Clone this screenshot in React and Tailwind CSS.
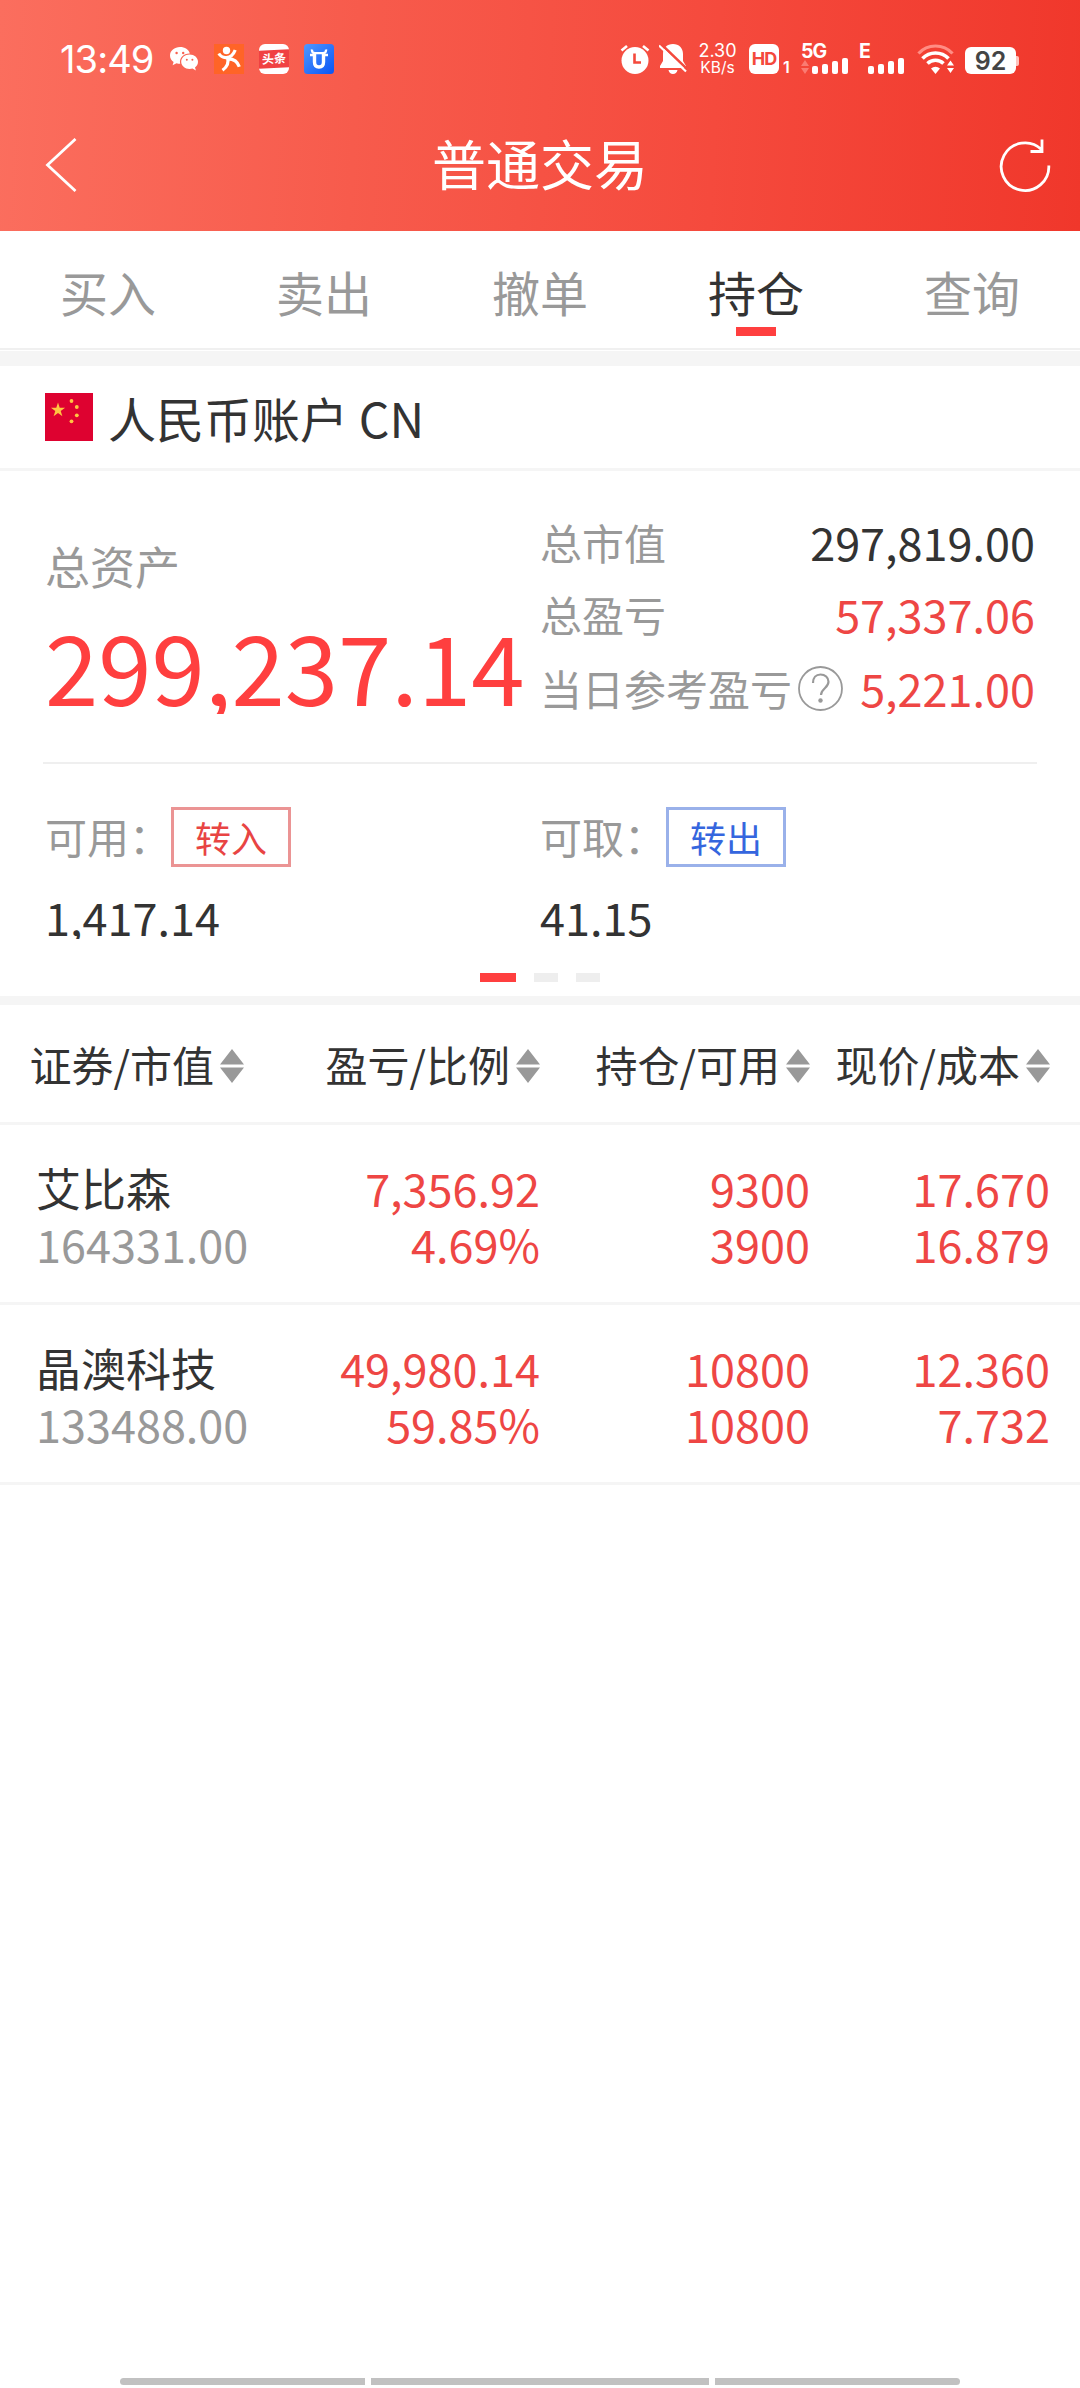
import React, { useState } from "react";

const tabs = ["买入", "卖出", "撤单", "持仓", "查询"];

const columns = [
  { label: "证券/市值", width: "w-[244px]" },
  { label: "盈亏/比例", width: "w-[296px]" },
  { label: "持仓/可用", width: "w-[270px]" },
  { label: "现价/成本", width: "w-[240px]" },
];

const holdings = [
  {
    name: "艾比森",
    value: "164331.00",
    profit: "7,356.92",
    ratio: "4.69%",
    amount: "9300",
    available: "3900",
    price: "17.670",
    cost: "16.879",
  },
  {
    name: "晶澳科技",
    value: "133488.00",
    profit: "49,980.14",
    ratio: "59.85%",
    amount: "10800",
    available: "10800",
    price: "12.360",
    cost: "7.732",
  },
];

function WechatIcon() {
  return (
    <svg className="w-[30px] h-[30px]" viewBox="0 0 30 30" fill="#fff">
      <path d="M11 3C5.500 3 1 6.700 1 11.400c0 2.600 1.400 4.900 3.600 6.500l-1 3.300 3.900-2c1.300.4 2.500.6 3.700.6-1.400-6 3.500-10.600 9.600-10.400C19.900 5.700 15.900 3 11 3z" />
      <path d="M20.600 10.600c-4.700 0-8.400 3.200-8.400 7.200s3.700 7.200 8.400 7.200c1 0 2-.2 2.900-.4l3.400 1.800-.9-2.900c1.900-1.400 3-3.400 3-5.700 0-4-3.700-7.200-8.400-7.200z" />
      <g fill="#f7604f">
        <circle cx="7.600" cy="9" r="1.200" />
        <circle cx="14.200" cy="9" r="1.200" />
        <circle cx="17.800" cy="15.800" r="1" />
        <circle cx="23.400" cy="15.800" r="1" />
      </g>
    </svg>
  );
}

function RunnerIcon() {
  return (
    <svg className="w-[30px] h-[30px]" viewBox="0 0 30 30">
      <rect width="30" height="30" fill="#ff6427" />
      <circle cx="12.500" cy="6.500" r="3.700" fill="#fff" />
      <path
        d="M4.800 9.500c2 3.200 4.700 4.300 7.700 4 4-.3 7-3 8.700-7.500M13.500 13.500c1.500 5-.5 9.500-5 12.700M13 14.800c6-.3 10.500 2.200 12.300 8"
        fill="none"
        stroke="#fff"
        strokeWidth="3.200"
      />
    </svg>
  );
}

function ToutiaoIcon() {
  return (
    <div className="w-[30px] h-[30px] rounded-[6px] bg-white flex items-center overflow-hidden">
      <div className="w-full h-[18px] bg-[#f04142] -skew-y-3 flex items-center justify-center text-white text-[12px] leading-none font-bold">
        头条
      </div>
    </div>
  );
}

function BullIcon() {
  return (
    <svg className="w-[30px] h-[30px]" viewBox="0 0 30 30">
      <defs>
        <linearGradient id="bull" x1="0" y1="0" x2="1" y2="1">
          <stop offset="0" stopColor="#4f98ff" />
          <stop offset="1" stopColor="#0a55f5" />
        </linearGradient>
      </defs>
      <rect width="30" height="30" rx="3.500" fill="url(#bull)" />
      <path d="M8 5.500c-.3 2.400.8 3.600 3 3.600h8c2.200 0 3.300-1.200 3-3.600" fill="none" stroke="#fff" strokeWidth="2.400" />
      <path d="M6 11h4.500M19.500 11H24" stroke="#fff" strokeWidth="2.600" />
      <path
        d="M10.500 9.500v8.500c0 3.400 1.500 5 4.500 5s4.500-1.600 4.500-5V9.500"
        fill="none"
        stroke="#fff"
        strokeWidth="3.400"
      />
    </svg>
  );
}

function AlarmIcon() {
  return (
    <svg className="w-[30px] h-[30px]" viewBox="0 0 30 30">
      <circle cx="15" cy="16.500" r="13.500" fill="#fff" />
      <path d="M1.500 6.500l5.500-4.500M28.500 6.500L23 2" stroke="#fff" strokeWidth="2.600" />
      <path d="M14.500 9.500v9h6.500" fill="none" stroke="#f4493c" strokeWidth="2.600" />
    </svg>
  );
}

function MutedIcon() {
  return (
    <svg className="w-[28px] h-[30px]" viewBox="0 0 28 30">
      <path
        d="M14 0C8 0 4 4 4 10v7l-3 5v2h26v-2l-3-5v-7c0-6-4-10-10-10zM9.500 26c.5 2.500 2.200 4 4.500 4s4-1.500 4.500-4z"
        fill="#fff"
      />
      <path d="M2 0L29 26" stroke="#f4493c" strokeWidth="2.600" />
      <path d="M0 1.500L27 27.500" stroke="#fff" strokeWidth="2.200" />
    </svg>
  );
}

function SignalBars() {
  return (
    <div className="flex items-end gap-[4px] h-[16px]">
      <div className="w-[6px] h-[8px] rounded-[2px] bg-white" />
      <div className="w-[6px] h-[10px] rounded-[2px] bg-white" />
      <div className="w-[6px] h-[13px] rounded-[2px] bg-white" />
      <div className="w-[6px] h-[16px] rounded-[2px] bg-white" />
    </div>
  );
}

function WifiIcon() {
  return (
    <svg className="w-[38px] h-[30px]" viewBox="0 0 38 30" fill="none" stroke="#fff">
      <path d="M1.500 9.500a23 23 0 0 1 34 0" stroke="#ff8d84" strokeWidth="3.200" />
      <path d="M5.500 14.500a18 18 0 0 1 26 0" strokeWidth="3.600" />
      <path d="M10.500 19.500a11.500 11.500 0 0 1 16 0" strokeWidth="3.600" />
      <path d="M14 24.500a7 7 0 0 1 9 0L18.500 30z" fill="#fff" stroke="none" />
      <path d="M33.500 16.500l3.500 5h-7zM33.500 29l3.500-5h-7z" fill="#fff" stroke="none" />
    </svg>
  );
}

function StatusBar() {
  return (
    <div className="h-[104px] pt-[44px] pl-[60px] flex items-start font-['Inter','Noto_Sans_CJK_SC',sans-serif] text-white">
      <div className="w-[109px] text-[38px] leading-[30px] tracking-[-0.9px]">13:49</div>
      <div className="flex gap-[15px]">
        <WechatIcon />
        <RunnerIcon />
        <ToutiaoIcon />
        <BullIcon />
      </div>
      <div className="ml-[286px] flex items-start">
        <AlarmIcon />
        <div className="ml-[9px]">
          <MutedIcon />
        </div>
        <div className="ml-[11px] w-[39px] text-center whitespace-nowrap">
          <div className="text-[18px] leading-[14px]">2.30</div>
          <div className="pt-[2px] text-[15.5px] leading-[15px]">KB/s</div>
        </div>
        <div className="ml-[12px] w-[30px] h-[30px] rounded-[6px] bg-white text-[#f4493c] text-[18px] leading-[30px] font-bold text-center tracking-[-1px]">
          HD
        </div>
        <div className="ml-[4px] w-[8px] pt-[17px] text-[16px] leading-[13px] font-semibold">1</div>
        <div className="ml-[10px] w-[47px] h-[30px] flex flex-col justify-between">
          <div className="text-[19.5px] leading-[14px] font-bold tracking-[-1px]">5G</div>
          <div className="flex justify-between items-end">
            <svg className="w-[8px] h-[14px]" viewBox="0 0 8 14" fill="#fa7b72">
              <path d="M4 0l4 6H0zM4 14l4-6H0z" />
            </svg>
            <SignalBars />
          </div>
        </div>
        <div className="ml-[11px] w-[45px] h-[30px] flex flex-col justify-between">
          <div className="text-[19.5px] leading-[14px] font-bold">E</div>
          <div className="flex justify-end">
            <SignalBars />
          </div>
        </div>
        <div className="ml-[13px]">
          <WifiIcon />
        </div>
        <div className="ml-[10px] mt-[3px] flex items-center">
          <div className="w-[51px] h-[27px] rounded-[6px] bg-white text-[#444] text-[25px] leading-[28px] font-semibold text-center">
            92
          </div>
          <div className="w-[3px] h-[10px] rounded-r-[2px] bg-[#ffc4bf]" />
        </div>
      </div>
    </div>
  );
}

function Header() {
  return (
    <div className="h-[231px] bg-[linear-gradient(93deg,#fb6e5e_0%,#f75b4c_33%,#f54a3d_66%,#f0372b_100%)]">
      <StatusBar />
      <div className="h-[127px] pl-[45px] pr-[29px] pb-[6px] flex items-center justify-between text-white">
        <svg className="w-[36px] h-[54px]" viewBox="0 0 36 54" fill="none" stroke="#fff" strokeWidth="2.800">
          <path d="M30.500 1L2.500 27l28 26" />
        </svg>
        <h1 className="-mt-[3px] text-[54px] leading-[78px]">普通交易</h1>
        <svg className="w-[52px] h-[54px]" viewBox="0 0 52 54" fill="none" stroke="#fff" strokeWidth="2.800">
          <path d="M49.800 27.500A23.800 23.800 0 1 1 42.500 11.500M43 1.500v12H31.500" />
        </svg>
      </div>
    </div>
  );
}

function SortIcon() {
  return (
    <svg className="w-[24px] h-[34px] ml-[6px] mt-[4px]" viewBox="0 0 24 34" fill="#999">
      <path d="M12 0l12 15.500H0zM12 34l12-15.500H0z" />
    </svg>
  );
}

function App() {
  const [activeTab, setActiveTab] = useState("持仓");

  return (
    <div className="w-[1080px] h-[2388px] flex flex-col bg-white text-[#333] overflow-hidden font-['Noto_Sans_CJK_SC',sans-serif]">
      <Header />

      <div className="h-[119px] flex border-b-2 border-[#f0f0f0]">
        {tabs.map((tab) => (
          <button
            key={tab}
            onClick={() => setActiveTab(tab)}
            className={`w-[216px] pt-[25px] flex flex-col items-center text-[48px] leading-[70px] ${
              tab === activeTab ? "text-[#333]" : "text-[#999]"
            }`}
          >
            {tab}
            {tab === activeTab && <div className="mt-px w-[40px] h-[9px] bg-[#ff3f3f]" />}
          </button>
        ))}
      </div>
      <div className="h-[15px] mt-px bg-[#f5f5f5]" />

      <div className="h-[105px] pl-[45px] flex items-center border-b-[3px] border-[#f5f5f5]">
        <svg className="w-[48px] h-[48px]" viewBox="0 0 48 48">
          <rect width="48" height="48" fill="#de0230" />
          <g fill="#ffc542">
            <path d="M13 9.500l1.700 5.200h5.400l-4.400 3.200 1.700 5.300-4.400-3.300-4.400 3.300 1.700-5.300-4.400-3.200h5.400z" />
            <circle cx="26.500" cy="8" r="1.900" />
            <circle cx="31.800" cy="14" r="1.900" />
            <circle cx="31.800" cy="22.300" r="1.900" />
            <circle cx="26.500" cy="28.300" r="1.900" />
          </g>
        </svg>
        <div className="ml-[15px] text-[48px] leading-[70px]">人民币账户 CN</div>
      </div>

      {/* Account summary */}
      <div className="h-[291px] flex">
        <div className="w-[540px] pl-[45px] pt-[62px]">
          <div className="text-[45px] leading-[66px] text-[#999]">总资产</div>
          <div className="h-[115px] overflow-hidden text-[96px] leading-[132px] text-[#ff3f3f]">299,237.14</div>
        </div>
        <div className="w-[495px] pt-[38px] text-[45px] leading-[66px]">
          <div className="h-[72px] flex justify-between">
            <span className="text-[42px] text-[#999]">总市值</span>
            <span>297,819.00</span>
          </div>
          <div className="h-[74px] flex justify-between">
            <span className="text-[42px] text-[#999]">总盈亏</span>
            <span className="text-[#ee4644]">57,337.06</span>
          </div>
          <div className="h-[59px] flex justify-between overflow-hidden">
            <div className="flex">
              <span className="text-[42px] text-[#999]">当日参考盈亏</span>
              <svg className="w-[46px] h-[46px] ml-[6px] mt-[11px]" viewBox="0 0 46 46" fill="none" stroke="#999">
                <circle cx="22.500" cy="22.500" r="21.500" strokeWidth="1.800" />
                <path d="M15 17c0-5.500 3-8.500 7.500-8.500s8 3 8 7.300c0 6.200-7.500 6.700-7.500 13.200" strokeWidth="2.200" />
                <circle cx="22.500" cy="34.500" r="2.200" fill="#999" stroke="none" />
              </svg>
            </div>
            <span className="text-[#ee4644]">5,221.00</span>
          </div>
        </div>
      </div>

      <div className="mx-[43px] h-[2px] bg-[#efefef]" />

      <div className="h-[209px] pl-[45px] pt-[43px] flex">
        <div className="w-[495px]">
          <div className="flex items-center h-[60px]">
            <span className="w-[126px] pb-[2px] text-[42px] leading-[58px] text-[#999]">可用：</span>
            <button className="w-[120px] h-[60px] border-[3px] border-[#eb9494] text-[36px] leading-[54px] text-[#e84443]">
              转入
            </button>
          </div>
          <div className="mt-[17px] h-[55px] overflow-hidden text-[45px] leading-[66px]">1,417.14</div>
        </div>
        <div className="w-[495px]">
          <div className="flex items-center h-[60px]">
            <span className="w-[126px] pb-[2px] text-[42px] leading-[58px] text-[#999]">可取：</span>
            <button className="w-[120px] h-[60px] border-[3px] border-[#9ab1ea] text-[36px] leading-[54px] text-[#3566de]">
              转出
            </button>
          </div>
          <div className="mt-[17px] h-[55px] overflow-hidden text-[45px] leading-[66px]">41.15</div>
        </div>
      </div>

      <div className="h-[23px] flex gap-[18px] justify-center">
        <div className="w-[36px] h-[9px] bg-[#ff3f3f]" />
        <div className="w-[24px] h-[9px] bg-[#eee]" />
        <div className="w-[24px] h-[9px] bg-[#eee]" />
      </div>
      <div className="h-[9px] bg-[#f5f5f5]" />

      {/* Holdings table */}
      <div className="h-[120px] flex border-b-[3px] border-[#f5f5f5] text-[42px] leading-[60px]">
        {columns.map((column) => (
          <div key={column.label} className={`${column.width} flex items-center justify-end whitespace-nowrap`}>
            {column.label}
            <SortIcon />
          </div>
        ))}
      </div>
      {holdings.map((item) => (
        <div
          key={item.name}
          className="h-[180px] pt-[35px] flex border-b-[3px] border-[#f5f5f5] text-[45px] leading-[56px] text-right text-[#ee4644]"
        >
          <div className="w-[244px] pl-[36px] text-left">
            <div className="text-[#333]">{item.name}</div>
            <div className="text-[#999]">{item.value}</div>
          </div>
          <div className="w-[296px]">
            <div>{item.profit}</div>
            <div>{item.ratio}</div>
          </div>
          <div className="w-[270px]">
            <div>{item.amount}</div>
            <div>{item.available}</div>
          </div>
          <div className="w-[240px]">
            <div>{item.price}</div>
            <div>{item.cost}</div>
          </div>
        </div>
      ))}

      {/* System navigation handles */}
      <div className="mt-auto mb-[3px] flex justify-center gap-[6px]">
        <div className="w-[245px] h-[7px] rounded-l-full bg-[#c1c1c1]" />
        <div className="w-[338px] h-[7px] bg-[#c1c1c1]" />
        <div className="w-[245px] h-[7px] rounded-r-full bg-[#c1c1c1]" />
      </div>
    </div>
  );
}

export default App;
